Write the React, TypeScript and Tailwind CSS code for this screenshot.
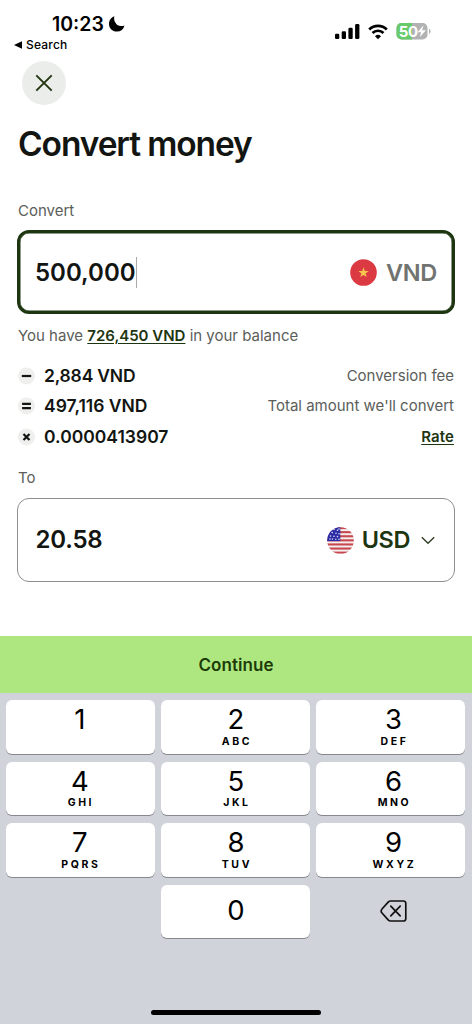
import React from "react";

const KEYS: { digit: string; letters: string }[] = [
  { digit: "1", letters: "" },
  { digit: "2", letters: "ABC" },
  { digit: "3", letters: "DEF" },
  { digit: "4", letters: "GHI" },
  { digit: "5", letters: "JKL" },
  { digit: "6", letters: "MNO" },
  { digit: "7", letters: "PQRS" },
  { digit: "8", letters: "TUV" },
  { digit: "9", letters: "WXYZ" },
];

// The outer columns' digits sit slightly towards the screen edges.
const COLUMN_SHIFT = ["pr-[2px]", "", "pl-[5px]"];

function StatusBar() {
  return (
    <header className="flex h-[61px] justify-between">
      <div className="pt-3 pl-[14px] text-black">
        <div className="flex h-6 items-center gap-[4px] pl-[38px]">
          <span className="text-[19.5px] leading-6 font-semibold">10:23</span>
          <svg width="17" height="16" viewBox="0 0 17 16">
            <path d="M6.300 .2C5.300 4.900 8.300 9.900 13 10c1.300 0 2.400-.1 3.500-.6A8 8 0 0 1 8.900 15.500C4.400 15.500 1 12.200 1 7.900 1 4.300 3.100 1.300 6.300.2Z" fill="#000" />
          </svg>
        </div>
        <div className="flex h-[18px] items-center gap-1">
          <svg width="8" height="8" viewBox="0 0 8 8">
            <path d="M0 4 8 .3v7.4Z" fill="#000" />
          </svg>
          <span className="text-[12px] font-medium tracking-[0.2px]">Search</span>
        </div>
      </div>
      <div className="flex h-[63px] items-center gap-[8px] pr-[41px]">
        <svg width="25" height="15" viewBox="0 0 25 15">
          <rect x="0" y="9.700" width="4.300" height="5.300" rx="1.300" />
          <rect x="6.700" y="7.200" width="4.300" height="7.800" rx="1.300" />
          <rect x="13.400" y="3.700" width="4.300" height="11.300" rx="1.300" />
          <rect x="20.100" y="0" width="4.300" height="15" rx="1.300" />
        </svg>
        <svg width="20" height="16" viewBox="0 0 20 16" fill="none" stroke="#000" strokeWidth="2.700">
          <path d="M1.200 5.500a12.600 12.600 0 0 1 17.600 0" />
          <path d="M4.500 9a7.800 7.800 0 0 1 11 0" />
          <path d="m10 15.200-3-3a4.300 4.300 0 0 1 6 0Z" fill="#000" stroke="none" />
        </svg>
        <svg width="35" height="17" viewBox="0 0 35 17">
          <defs>
            <clipPath id="battery">
              <rect x="0.500" y="0" width="31" height="16.500" rx="5" />
            </clipPath>
          </defs>
          <g clipPath="url(#battery)">
            <rect width="32" height="17" fill="#b1b2b3" />
            <rect width="16" height="17" fill="#69ca6c" />
          </g>
          <path d="M33 5.800c2 .6 2 4.600 0 5.200Z" fill="#b1b2b3" />
          <text x="2.700" y="13.700" fontSize="15" fontWeight="700" fill="#fff" letterSpacing="-0.300">50</text>
          <path d="m27.500 2.300-6 6.900h3.600l-1.400 5 6.200-7h-3.700Z" fill="#fff" />
        </svg>
      </div>
    </header>
  );
}

function VietnamFlag() {
  return (
    <svg width="27" height="27" viewBox="0 0 27 27">
      <circle cx="13.500" cy="13.500" r="13.300" fill="#dc3a42" />
      <path d="m13.500 8.300 1.300 3.700h3.900l-3.100 2.400 1.100 3.700-3.200-2.200-3.200 2.200 1.100-3.700-3.100-2.400h3.900Z" fill="#f8c44f" />
    </svg>
  );
}

function UsFlag() {
  const stars = [
    [3.5, 9], [7, 2.5], [10.5, 3.2], [5.2, 5.6], [9, 6.2], [12, 6.8],
    [7, 9.2], [10.5, 9.6], [3, 12], [5.5, 12], [8.8, 12.2], [12, 12.2], [12, 2],
  ];
  return (
    <svg width="27" height="27" viewBox="0 0 27 27">
      <defs>
        <clipPath id="us-circle">
          <circle cx="13.500" cy="13.500" r="13.300" />
        </clipPath>
      </defs>
      <g clipPath="url(#us-circle)">
        <rect width="27" height="27" fill="#f5eeee" />
        {[0, 4.1, 8.2, 12.3, 16.4, 20.5, 24.6].map((y) => (
          <rect key={y} y={y} width="27" height="2.100" fill="#c8484f" />
        ))}
        <rect width="13.300" height="14.100" fill="#2b2ba5" />
        {stars.map(([x, y]) => (
          <circle key={`${x}-${y}`} cx={x} cy={y} r="0.800" fill="#dcdcf5" />
        ))}
      </g>
    </svg>
  );
}

function Operator({ d }: { d: string }) {
  return (
    <svg width="18" height="18" viewBox="0 0 18 18">
      <circle cx="8.500" cy="9" r="8.500" fill="#eff0ed" />
      <path d={d} stroke="#121511" strokeWidth="2.200" fill="none" />
    </svg>
  );
}

function Breakdown() {
  const row = "flex h-[30.5px] items-center";
  const value = "ml-2 flex-1 text-[17.5px] font-semibold";
  const label = "text-[15px] text-[#5b5e5a]";
  return (
    <div className="mt-[14.5px] flex flex-col text-[#121511]">
      <div className={row}>
        <Operator d="M3.800 9h9.400" />
        <span className={`${value} tracking-[-0.2px]`}>2,884 VND</span>
        <span className={label}>Conversion fee</span>
      </div>
      <div className={row}>
        <Operator d="M4.100 6.900h8.800M4.100 11.200h8.800" />
        <span className={value}>497,116 VND</span>
        <span className={label}>Total amount we'll convert</span>
      </div>
      <div className={row}>
        <Operator d="m5.500 6 6 6M11.500 6l-6 6" />
        <span className={value}>0.0000413907</span>
        <a className="text-[15px] font-semibold tracking-[0.1px] text-[#1d3510] underline decoration-1 underline-offset-2">Rate</a>
      </div>
    </div>
  );
}

function Keypad() {
  const key = "flex h-[53.5px] flex-col items-center rounded-[6px] bg-white shadow-[0_1px_0.5px_#85888d]";
  return (
    <div className="grid flex-1 grid-cols-3 content-start gap-x-[6px] gap-y-[8px] bg-[#d0d3da] pr-[6.5px] pl-[6.4px] pt-[7px] text-black">
      {KEYS.map(({ digit, letters }, i) => (
        <button key={digit} className={`${key} ${COLUMN_SHIFT[i % 3]}`}>
          <span className="mt-[5px] text-[27.5px] leading-7 font-[375]">{digit}</span>
          <span className="mt-[3.500px] pl-[2px] text-[10.5px] leading-[10px] font-bold tracking-[2.6px]">{letters}</span>
        </button>
      ))}
      <button className={`${key} col-start-2 justify-center pb-[3px] text-[27.5px] leading-8 font-[375]`}>0</button>
      <button className="flex h-[53.5px] items-center justify-center pb-px pl-[6px]">
        <svg width="28" height="24" viewBox="0 0 28 24" fill="none" stroke="#111" strokeWidth="1.700">
          <path d="M10.500 2H23.500a2.300 2.300 0 0 1 2.300 2.300v15.400a2.300 2.300 0 0 1-2.300 2.300H10.500a3 3 0 0 1-2.100-.9L2 14a2.800 2.800 0 0 1 0-4l6.400-7.100a3 3 0 0 1 2.100-.9Z" strokeLinejoin="round" />
          <path d="m10.800 7.200 9.400 9.600M20.200 7.200l-9.400 9.600" strokeLinecap="round" />
        </svg>
      </button>
    </div>
  );
}

export default function App() {
  return (
    <div className="relative flex h-[1024px] w-[472px] flex-col overflow-hidden bg-white font-['Inter',sans-serif]">
      <StatusBar />
      <main className="flex h-[575px] flex-col px-[18px]">
        <button className="ml-1 flex size-11 items-center justify-center rounded-full bg-[#eaedea]" aria-label="Close">
          <svg width="18" height="18" viewBox="0 0 18 18" stroke="#22350f" strokeWidth="1.900">
            <path d="m1.300 1.300 15.400 15.400M16.700 1.300 1.300 16.700" />
          </svg>
        </button>
        <h1 className="mt-[19px] text-[33.5px] leading-10 font-semibold tracking-[-1.100px] text-[#121511]">Convert money</h1>
        <p className="mt-[37px] text-[15px] leading-5 text-[#5b5e5a]">Convert</p>
        <div className="mt-[9px] -mr-px -ml-px flex h-[84px] shrink-0 items-center rounded-[12px] border-[3px] border-[#1d3510] px-[15px] pt-px shadow-[inset_0_0_0_0.5px_#1d3510]">
          <span className="text-[24px] font-semibold text-[#121511]">500,000</span>
          <span className="h-[31px] w-px bg-[#a9aba9]" />
          <span className="ml-auto flex items-center gap-[9px]">
            <VietnamFlag />
            <span className="text-[23.5px] font-semibold tracking-[-0.300px] text-[#717370]">VND</span>
          </span>
        </div>
        <p className="mt-[12px] text-[15px] leading-5 text-[#5b5e5a]">
          You have{" "}
          <a className="font-semibold text-[#1d3510] underline decoration-1 underline-offset-2">726,450 VND</a> in
          your balance
        </p>
        <Breakdown />
        <p className="mt-[15.500px] text-[15px] leading-5 text-[#5b5e5a]">To</p>
        <div className="mt-[10px] -mr-px -ml-px flex h-[84px] shrink-0 items-center rounded-[12px] border border-[#8e908d] px-[17.500px] pt-px">
          <span className="text-[24px] font-semibold tracking-[-0.200px] text-[#121511]">20.58</span>
          <span className="ml-auto flex items-center">
            <UsFlag />
            <span className="ml-2 text-[23.5px] font-semibold tracking-[-0.400px] text-[#1d3510]">USD</span>
            <svg className="mr-[1.500px] ml-[11px]" width="14" height="9" viewBox="0 0 14 9" fill="none" stroke="#34422b" strokeWidth="1.500">
              <path d="m.8 1.300 6.200 6 6.200-6" />
            </svg>
          </span>
        </div>
      </main>
      <button className="h-[57px] shrink-0 bg-[#aee780] pt-[2px] text-[17px] font-semibold tracking-[0.050px] text-[#1d3b08]">Continue</button>
      <Keypad />
      <div className="absolute bottom-[9px] left-[151px] h-[5.500px] w-[170px] rounded-full bg-black" />
    </div>
  );
}
